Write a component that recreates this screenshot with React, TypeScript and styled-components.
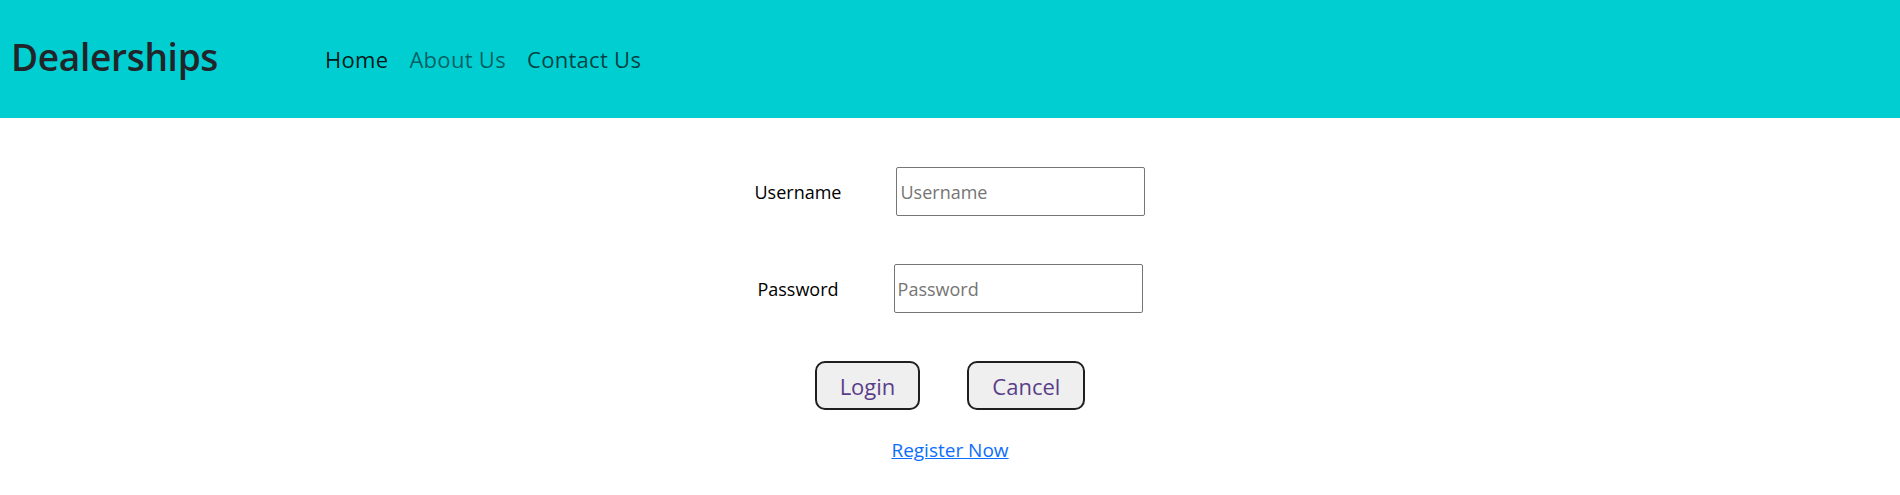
import React from "react";
import styled, { createGlobalStyle } from "styled-components";

const GlobalStyle = createGlobalStyle`
  body {
    margin: 0;
    background: #ffffff;
    font-family: "Open Sans", "Noto Sans", sans-serif;
    color: #212529;
  }
`;

const links = [
  { name: "Home", tone: "active" },
  { name: "About Us", tone: "muted" },
  { name: "Contact Us", tone: "hover" },
] as const;

type Tone = (typeof links)[number]["tone"];

const Header = () => {
  return (
    <Navbar>
      <Brand href="#">Dealerships</Brand>
      <NavList>
        {links.map((l) => (
          <NavLink key={l.name} href="#" $tone={l.tone}>
            {l.name}
          </NavLink>
        ))}
      </NavList>
    </Navbar>
  );
};

const LoginPanel = () => {
  return (
    <Form onSubmit={(e) => e.preventDefault()}>
      <Row>
        <Label>Username</Label>
        <Input type="text" placeholder="Username" name="username" />
      </Row>
      <Row>
        <Label>Password</Label>
        <Input type="password" placeholder="Password" name="psw" />
      </Row>
      <Buttons>
        <ActionButton type="submit">Login</ActionButton>
        <ActionButton type="button">Cancel</ActionButton>
      </Buttons>
      <RegisterLink href="#">Register Now</RegisterLink>
    </Form>
  );
};

const App = () => {
  return (
    <>
      <GlobalStyle />
      <Header />
      <LoginPanel />
    </>
  );
};

export default App;

const Navbar = styled.nav`
  display: flex;
  align-items: center;
  height: 118px;
  padding-left: 11px;
  background: #00ced1;
  box-sizing: border-box;
`;

const Brand = styled.a`
  width: 314px;
  font-size: 37px;
  font-weight: 600;
  line-height: 1;
  color: #212529;
  text-decoration: none;
  letter-spacing: -0.3px;
  margin-top: -6px;
`;

const NavList = styled.div`
  display: flex;
  gap: 21px;
`;

const toneColor: Record<Tone, string> = {
  active: "rgba(0, 0, 0, 0.9)",
  muted: "rgba(0, 0, 0, 0.55)",
  hover: "rgba(0, 0, 0, 0.7)",
};

const NavLink = styled.a<{ $tone: Tone }>`
  font-size: 22px;
  line-height: 1.2;
  color: ${(p) => toneColor[p.$tone]};
  text-decoration: none;
  letter-spacing: 0.3px;
`;

const Form = styled.form`
  display: flex;
  flex-direction: column;
  align-items: center;
  padding-top: 49px;
`;

const Row = styled.div`
  display: flex;
  align-items: center;
  gap: 55px;
  margin-bottom: 48px;
`;

const Label = styled.label`
  font-size: 18px;
  color: #000;
`;

const Input = styled.input`
  width: 249px;
  height: 49px;
  box-sizing: border-box;
  padding: 0 3px;
  border: 1px solid #767676;
  border-radius: 2px;
  font-family: "Open Sans", "Noto Sans", sans-serif;
  font-size: 18px;
  color: #000;
  &::placeholder {
    color: #757575;
  }
`;

const Buttons = styled.div`
  display: flex;
  gap: 47px;
  margin-bottom: 27px;
`;

const ActionButton = styled.button`
  height: 49px;
  padding: 0 23px;
  border: 2px solid #1f1f1f;
  border-radius: 10px;
  background: #efefef;
  font-family: "Open Sans", "Noto Sans", sans-serif;
  font-size: 22px;
  color: #5a3d8a;
  cursor: pointer;
`;

const RegisterLink = styled.a`
  font-size: 19px;
  color: #0d6efd;
  text-decoration: underline;
`;
